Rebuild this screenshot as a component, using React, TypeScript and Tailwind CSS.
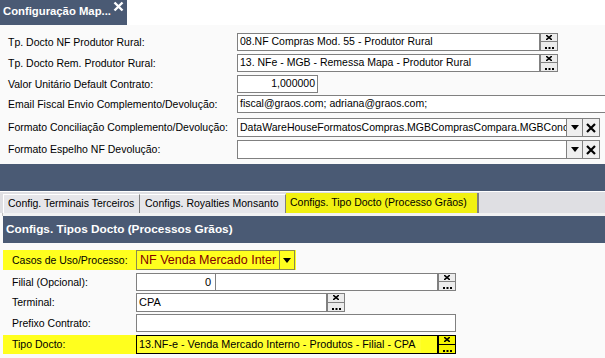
import React from "react";

const XDots = ({ yellow = false }: { yellow?: boolean }) => (
  <div
    className={`flex h-full w-[18px] shrink-0 flex-col border ${
      yellow ? "border-black bg-[#f4f400]" : "border-[#808080] bg-[#ececec]"
    }`}
  >
    <div className={`flex flex-1 items-center justify-center border-b ${yellow ? "border-black" : "border-[#808080]"}`}>
      <svg width="6" height="5" viewBox="0 0 6 5">
        <path d="M0 0L6 5M6 0L0 5" stroke="black" strokeWidth="1.6" />
      </svg>
    </div>
    <div className="flex flex-1 items-end justify-center pb-[1px]">
      <svg width="9" height="2" viewBox="0 0 9 2">
        <rect x="0" y="0" width="2" height="2" fill="black" />
        <rect x="3.5" y="0" width="2" height="2" fill="black" />
        <rect x="7" y="0" width="2" height="2" fill="black" />
      </svg>
    </div>
  </div>
);

const Tri = () => (
  <svg width="8" height="5" viewBox="0 0 8 5">
    <path d="M0 0H8L4 5Z" fill="black" />
  </svg>
);

const BigX = () => (
  <svg width="10" height="10" viewBox="0 0 10 10">
    <path d="M1 1L9 9M9 1L1 9" stroke="black" strokeWidth="2.2" />
  </svg>
);

const Label = ({ children }: { children: React.ReactNode }) => (
  <div className="w-[237px] shrink-0 whitespace-nowrap pl-[8px] text-[10.5px] leading-none text-black">{children}</div>
);

const SelectRow = ({ label, value }: { label: string; value: string }) => (
  <div className="flex h-[19px] items-center">
    <Label>{label}</Label>
    <div className="flex h-full w-[346px] shrink-0 border border-[#808080] bg-white">
      <div className="flex flex-1 items-center overflow-hidden whitespace-nowrap pl-[2px] text-[10.5px]">{value}</div>
      <div className="flex w-[16px] shrink-0 items-center justify-center border-l border-[#808080] bg-[#efefef]">
        <Tri />
      </div>
    </div>
    <div className="flex h-full w-[17px] shrink-0 items-center justify-center border border-l-0 border-[#808080] bg-[#efefef]">
      <BigX />
    </div>
  </div>
);

const BLabel = ({ children }: { children: React.ReactNode }) => (
  <div className="w-[133px] shrink-0 whitespace-nowrap pl-[9px] text-[10.5px] leading-none">{children}</div>
);

export default function App() {
  return (
    <div className="h-[358px] w-[605px] overflow-hidden bg-[#fafafa] font-['Liberation_Sans',Arial,sans-serif] text-black">
      {/* title */}
      <div className="flex h-[25px] bg-white">
        <div className="flex w-[127px] items-start overflow-hidden bg-[#4a5a74] pl-[3px]">
          <span className="mt-[6px] whitespace-nowrap text-[11.3px] font-bold leading-none text-white">Configuração Map...</span>
          <svg width="11" height="11" viewBox="0 0 11 11" className="ml-[2px] mt-[1px] shrink-0">
            <path d="M1.5 1.5L9.5 9.5M9.5 1.5L1.5 9.5" stroke="white" strokeWidth="2.4" />
          </svg>
        </div>
      </div>

      {/* top form */}
      <div className="flex flex-col pt-[8px]">
        <div className="flex h-[18px] items-center">
          <Label>Tp. Docto NF Produtor Rural:</Label>
          <div className="flex h-full w-[303px] items-center border border-[#808080] bg-white pl-[2px] text-[10.5px]">
            08.NF Compras Mod. 55 - Produtor Rural
          </div>
          <XDots />
        </div>
        <div className="mt-[3px] flex h-[18px] items-center">
          <Label>Tp. Docto Rem. Produtor Rural:</Label>
          <div className="flex h-full w-[303px] items-center border border-[#808080] bg-white pl-[2px] text-[10.5px]">
            13. NFe - MGB - Remessa Mapa - Produtor Rural
          </div>
          <XDots />
        </div>
        <div className="mt-[3px] flex h-[18px] items-center">
          <Label>Valor Unitário Default Contrato:</Label>
          <div className="flex h-full w-[81px] items-center justify-end border border-[#808080] bg-white pr-[2px] text-[10.5px]">
            1,000000
          </div>
        </div>
        <div className="mt-[2px] flex h-[18px] items-center">
          <Label>Email Fiscal Envio Complemento/Devolução:</Label>
          <div className="flex h-full w-[380px] shrink-0 items-center whitespace-nowrap border border-[#808080] bg-white pl-[2px] text-[10.5px]">
            fiscal@graos.com; adriana@graos.com;
          </div>
        </div>
        <div className="mt-[5px]">
          <SelectRow
            label="Formato Conciliação Complemento/Devolução:"
            value="DataWareHouseFormatosCompras.MGBComprasCompara.MGBConciliacao"
          />
        </div>
        <div className="mt-[3px]">
          <SelectRow label="Formato Espelho NF Devolução:" value="" />
        </div>
      </div>

      {/* dark band */}
      <div className="mt-[5px] h-[27px] bg-[#4a5a74]" />

      {/* tabs */}
      <div className="flex h-[22px] items-end border-t border-white bg-[#dfdfe3] pl-[3px]">
        <div className="flex h-[19px] w-[137px] items-center whitespace-nowrap border-l border-r border-t border-l-white border-r-[#808080] border-t-white bg-[#e6e6ea] pl-[4px] text-[10.5px]">
          Config. Terminais Terceiros
        </div>
        <div className="flex h-[19px] w-[146px] items-center whitespace-nowrap border-r border-t border-r-[#808080] border-t-white bg-[#e6e6ea] pl-[5px] text-[10.5px]">
          Configs. Royalties Monsanto
        </div>
        <div className="flex h-[20px] w-[193px] items-center whitespace-nowrap border-r-2 border-r-[#808080] bg-[#f1f111] pl-[4px] text-[10.5px]">
          Configs. Tipo Docto (Processo Grãos)
        </div>
      </div>

      {/* panel */}
      <div className="ml-[2px] h-[3px] border-l border-[#c0c0c0] bg-[#f2f2f2]" />
      <div className="ml-[3px] flex h-[27px] items-center bg-[#4a5a74] pl-[3px]">
        <span className="whitespace-nowrap text-[11.8px] font-bold text-white">Configs. Tipos Docto (Processos Grãos)</span>
      </div>

      <div className="ml-[3px] flex flex-col pt-[7px]">
        <div className="flex h-[20px] w-[293px] items-center bg-[#ffff1e]">
          <BLabel>Casos de Uso/Processo:</BLabel>
          <div className="flex h-full w-[144px] shrink-0 items-center overflow-hidden whitespace-nowrap border border-[#8a8a50] bg-[#ffff1e] pl-[3px] text-[12.5px] text-[#800000]">
            NF Venda Mercado Inter
          </div>
          <div className="flex h-full w-[15px] shrink-0 items-center justify-center border border-l-0 border-[#8a8a50] bg-[#ffff1e]">
            <Tri />
          </div>
        </div>

        <div className="mt-[3px] flex h-[18px] items-center">
          <BLabel>Filial (Opcional):</BLabel>
          <div className="flex h-full w-[80px] items-center justify-end border border-[#808080] bg-white pr-[4px] text-[11px]">0</div>
          <div className="h-full w-[222px] border border-l-0 border-[#808080] bg-white" />
          <XDots />
        </div>

        <div className="mt-[2px] flex h-[19px] items-center">
          <BLabel>Terminal:</BLabel>
          <div className="flex h-full w-[191px] items-center border border-[#808080] bg-white pl-[2px] text-[11px]">CPA</div>
          <XDots />
        </div>

        <div className="mt-[2px] flex h-[18px] items-center">
          <BLabel>Prefixo Contrato:</BLabel>
          <div className="h-full w-[320px] border border-[#808080] bg-white" />
        </div>

        <div className="mt-[3px] flex h-[19px] w-[453px] items-center bg-[#ffff1e]">
          <BLabel>Tipo Docto:</BLabel>
          <div className="flex h-full w-[302px] items-center overflow-hidden whitespace-nowrap border border-black bg-[#ffff1e] pl-[2px] text-[10.8px]">
            <span className="bg-[#ffff30] pr-[6px]">13.NF-e - Venda Mercado Interno - Produtos - Filial - CPA</span>
          </div>
          <XDots yellow />
        </div>
      </div>
    </div>
  );
}
